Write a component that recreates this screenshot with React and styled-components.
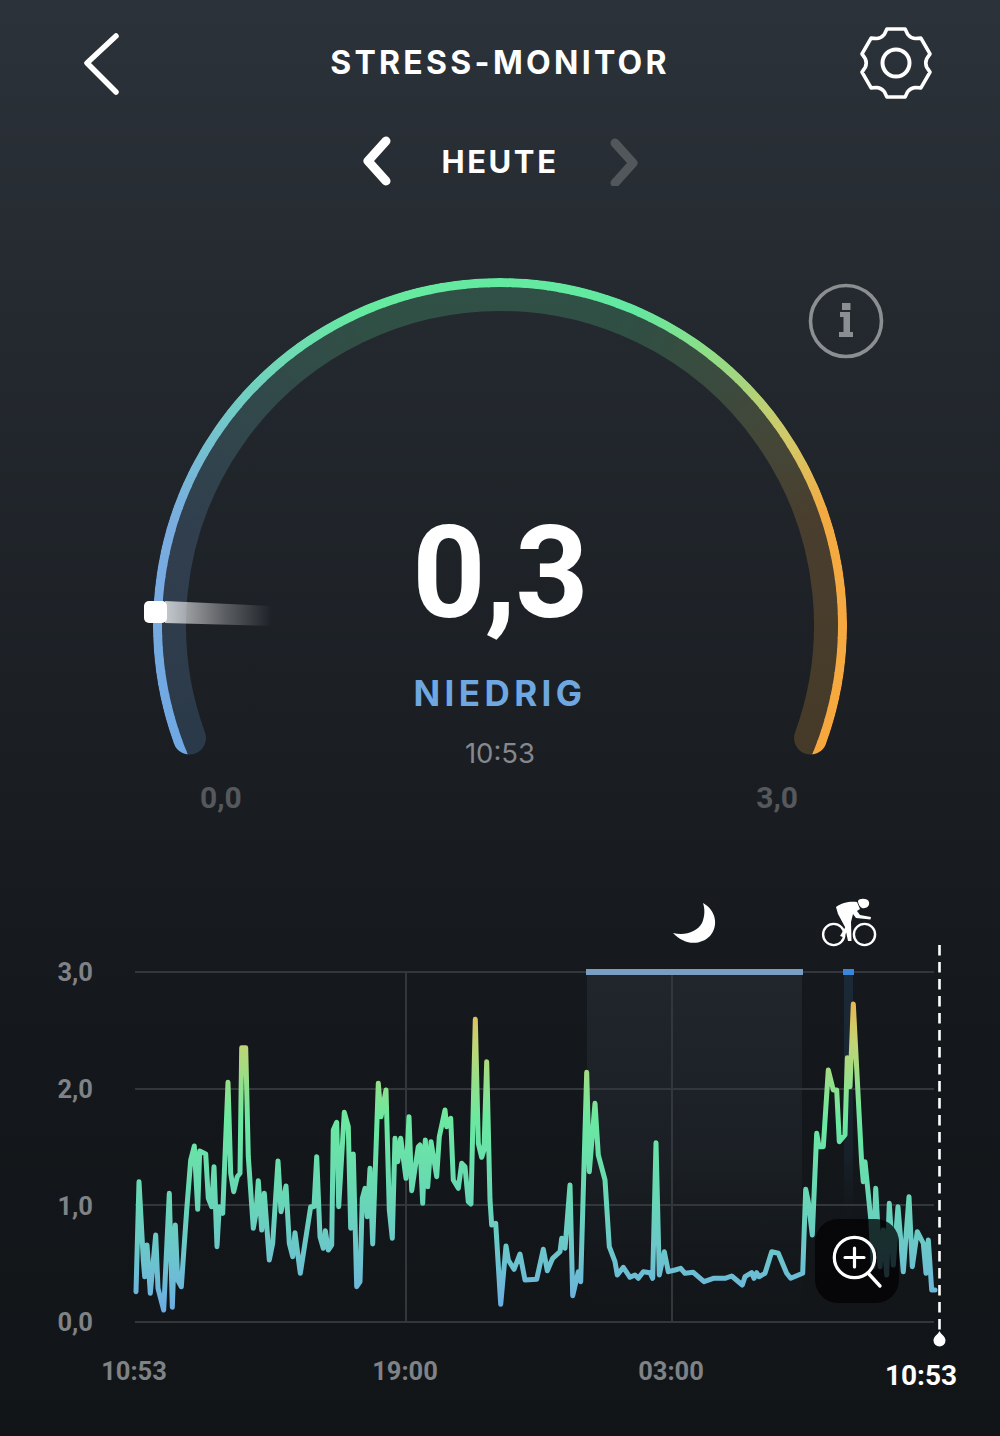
import React from "react";
import styled, { createGlobalStyle } from "styled-components";

const Global = createGlobalStyle`
  html, body { margin: 0; padding: 0; background: #12161a; }
  * { box-sizing: border-box; }
`;

const Page = styled.div`
  width: 1000px;
  height: 1436px;
  overflow: hidden;
  display: flex;
  flex-direction: column;
  background: linear-gradient(180deg, #2b3239 0%, #23282e 25%, #1b1f24 50%, #14181c 72%, #111518 100%);
  font-family: "Inter", "Liberation Sans", sans-serif;
  color: #fff;
`;

const Header = styled.header`
  height: 126px;
  padding: 0 67px;
  display: grid;
  grid-template-columns: 1fr auto 1fr;
  align-items: center;
`;

const BackIcon = styled.svg`
  justify-self: start;
  margin-left: 13px;
`;

const GearIcon = styled.svg`
  justify-self: end;
`;

const Title = styled.h1`
  margin: 0;
  font-size: 32px;
  font-weight: 700;
  letter-spacing: 3.3px;
  line-height: 1;
`;

const DayNav = styled.nav`
  height: 70px;
  display: flex;
  align-items: center;
  justify-content: center;
  gap: 46px;
`;

const DayLabel = styled.span`
  font-size: 31px;
  font-weight: 700;
  letter-spacing: 2.6px;
  line-height: 1;
`;

const GaugeSection = styled.section`
  position: relative;
  margin-top: 64px;
  width: 1000px;
`;

const GaugeSvg = styled.svg`
  display: block;
  width: 1000px;
  height: 520px;
`;

const Readout = styled.div`
  position: absolute;
  left: 0;
  right: 0;
  top: 248px;
  display: flex;
  flex-direction: column;
  align-items: center;
`;

const Value = styled.div`
  font-family: "Roboto", "Liberation Sans", sans-serif;
  font-weight: 700;
  font-size: 128px;
  line-height: 130px;
  letter-spacing: -1px;
`;

const Level = styled.div`
  margin-top: 35px;
  font-size: 35px;
  font-weight: 700;
  line-height: 40px;
  letter-spacing: 4.4px;
  color: #6fa7e0;
`;

const Time = styled.div`
  margin-top: 24px;
  font-size: 27.5px;
  line-height: 32px;
  color: #85888c;
`;

const InfoButton = styled.div`
  position: absolute;
  left: 808px;
  top: 23px;
  width: 76px;
  height: 76px;
`;

const Scale = styled.div`
  height: 34px;
  padding: 0 202px 0 200px;
  display: flex;
  align-items: center;
  justify-content: space-between;
  font-family: "Roboto", "Liberation Sans", sans-serif;
  font-weight: 700;
  font-size: 30px;
  color: #55585c;
`;

const ChartSection = styled.section`
  position: relative;
  margin-top: 76px;
  width: 1000px;
`;

const ChartSvg = styled.svg`
  display: block;
  width: 1000px;
  height: 530px;
`;

const Tick = styled.text`
  font-family: "Roboto", "Liberation Sans", sans-serif;
  font-weight: 700;
  font-size: ${(p) => (p.$now ? 28 : 25.5)}px;
  fill: ${(p) => (p.$now ? "#ffffff" : "#7f8286")};
`;

const ZoomButton = styled.button`
  position: absolute;
  left: 815px;
  top: 329px;
  width: 84px;
  height: 84px;
  padding: 0;
  border: 0;
  border-radius: 23px;
  background: rgba(2, 3, 4, 0.78);
  display: flex;
  align-items: center;
  justify-content: center;
`;

const scaleZ = (pts, ox, oy) => pts.map(([x, y]) => [x / 3 + ox, y / 3 + oy]);

const traceA = scaleZ(
  [[408,1025],[417,695],[430,930],[434,980],[441,885],[451,1030],[467,855],[474,1015],[491,1080],[508,730],[517,1072],[526,825],[533,990],[544,1010],[560,780],[572,630],[583,588],[593,778],[599,603],[617,612],[625,745],[635,770],[642,650],[651,890],[658,770],[668,790],[684,397],[692,670],[701,725],[712,680],[720,670],[725,293],[737,293],[745,620],[760,835],[768,790],[775,692],[785,840],[793,730],[808,930],[818,880],[834,633],[843,785],[858,708],[868,880],[878,920],[885,848],[901,970],[932,770],[942,770],[950,620],[960,860],[970,895],[976,842],[985,900],[995,885],[1000,540],[1010,517],[1016,770]],
  0, 950
);
const traceB = scaleZ(
  [[43,487],[55,530],[62,835],[70,612],[80,1010],[90,995],[97,745],[105,715],[112,800],[120,655],[128,882],[145,400],[153,500],[168,420],[178,780],[187,865],[195,565],[203,635],[212,565],[228,685],[237,500],[245,722],[265,590],[270,585],[278,760],[286,570],[293,710],[303,575],[320,680],[328,560],[345,480],[350,530],[362,505],[370,690],[385,715],[395,640],[405,650],[415,755],[423,762],[436,208],[445,580],[455,622],[462,600],[470,335],[480,750],[485,825],[497,820],[512,1063],[528,888],[535,930],[552,958],[570,912],[585,990],[620,988],[640,898],[652,962],[668,925],[690,905],[695,865],[705,895],[720,705],[728,1037],[745,965],[752,995],[770,367],[778,665],[795,460],[805,615],[825,690],[838,890],[855,935],[862,975],[880,952],[900,982],[915,975],[925,985],[940,965],[960,968],[968,985],[978,578],[988,975],[1003,905],[1015,965]],
  330, 950
);
const traceC = scaleZ(
  [[45,1140],[62,1135],[75,1150],[100,1147],[132,1175],[160,1165],[195,1165],[215,1158],[247,1185],[255,1160],[275,1148],[282,1165],[290,1148],[297,1160],[315,1150],[335,1085],[355,1090],[380,1150],[392,1165],[428,1150],[437,898],[445,935],[457,1035],[470,730],[477,770],[490,770],[505,540],[520,600],[530,600],[538,755],[555,735],[562,503],[570,590],[580,342],[605,820],[610,875],[615,815],[632,985],[640,1130],[647,895],[660,1130],[670,1020],[680,1155],[688,940],[700,1125],[714,950],[730,1145],[747,920],[757,1130],[772,1025],[790,1060],[798,1150],[805,1050],[815,1200],[825,1200]],
  660, 890
);
const tracePath =
  "M" + [...traceA, ...traceB, ...traceC].map(([x, y]) => `${x.toFixed(1)} ${y.toFixed(1)}`).join("L");

const CX = 500;
const CY = 625;
const START = 204;
const END = -24;
const stops = [
  [0, [111, 168, 227]],
  [0.18, [122, 172, 224]],
  [0.23, [116, 188, 212]],
  [0.28, [114, 203, 196]],
  [0.33, [110, 218, 180]],
  [0.4, [102, 234, 160]],
  [0.6, [98, 232, 160]],
  [0.65, [133, 224, 140]],
  [0.695, [165, 214, 126]],
  [0.73, [197, 205, 110]],
  [0.76, [215, 198, 100]],
  [0.81, [244, 170, 66]],
  [1, [246, 168, 62]],
];
const colorAt = (t) => {
  for (let i = 1; i < stops.length; i++) {
    if (t <= stops[i][0]) {
      const [t0, c0] = stops[i - 1];
      const [t1, c1] = stops[i];
      const k = (t - t0) / (t1 - t0);
      return `rgb(${c0.map((c, j) => Math.round(c + (c1[j] - c) * k)).join(",")})`;
    }
  }
  return "rgb(246,168,62)";
};
const polar = (r, a) => {
  const rad = (a * Math.PI) / 180;
  return [CX + r * Math.cos(rad), CY - r * Math.sin(rad)];
};
const arc = (r, a0, a1) => {
  const [x0, y0] = polar(r, a0);
  const [x1, y1] = polar(r, a1);
  const large = Math.abs(a0 - a1) > 180 ? 1 : 0;
  return `M${x0.toFixed(2)} ${y0.toFixed(2)}A${r} ${r} 0 ${large} 1 ${x1.toFixed(2)} ${y1.toFixed(2)}`;
};
const COUNT = 114;
const SEGMENTS = Array.from({ length: COUNT }, (_, i) => {
  const a0 = START + ((END - START) * i) / COUNT;
  const a1 = START + ((END - START) * (i + 1.15)) / COUNT;
  return { a0, a1: Math.max(a1, END), color: colorAt((i + 0.5) / COUNT) };
});

const gearPath = (() => {
  const c = 37;
  const pt = (r, a) => {
    const rad = (a * Math.PI) / 180;
    return `${(c + r * Math.cos(rad)).toFixed(2)} ${(c + r * Math.sin(rad)).toFixed(2)}`;
  };
  let d = "";
  for (let i = 0; i < 6; i++) {
    const a = -90 + i * 60;
    d += `${i === 0 ? "M" : "L"}${pt(31, a - 22)}L${pt(35.2, a - 15)}L${pt(35.2, a + 15)}L${pt(31, a + 22)}`;
    d += `A11 11 0 0 0 ${pt(31, a + 38)}`;
  }
  return d + "Z";
})();

function App() {
  return (
    <Page>
      <Global />
      <Header>
        <BackIcon width="44" height="66" viewBox="0 0 44 66" aria-label="Zurück">
          <path d="M36 4 L7 31 L36 60" transform="translate(0 2)" fill="none" stroke="#fff" strokeWidth="5.5" strokeLinecap="round" strokeLinejoin="round" />
        </BackIcon>
        <Title>STRESS-MONITOR</Title>
        <GearIcon width="74" height="74" viewBox="0 0 74 74" aria-label="Einstellungen">
          <path d={gearPath} fill="none" stroke="#fff" strokeWidth="3.6" strokeLinejoin="round" />
          <circle cx="37" cy="37" r="13.5" fill="none" stroke="#fff" strokeWidth="4" />
        </GearIcon>
      </Header>

      <DayNav>
        <svg width="34" height="50" viewBox="0 0 34 50">
          <path d="M25 5 L7 25 L25 45" fill="none" stroke="#fff" strokeWidth="9" strokeLinecap="round" strokeLinejoin="round" />
        </svg>
        <DayLabel>HEUTE</DayLabel>
        <svg width="34" height="50" viewBox="0 0 34 50">
          <path d="M10 7 L28 27 L10 47" fill="none" stroke="#52575c" strokeWidth="9" strokeLinecap="round" strokeLinejoin="round" />
        </svg>
      </DayNav>

      <GaugeSection>
        <GaugeSvg viewBox="0 260 1000 520">
          <defs>
            <linearGradient id="needle" gradientUnits="userSpaceOnUse" x1="165" y1="0" x2="272" y2="0">
              <stop offset="0" stopColor="#fff" stopOpacity="0.72" />
              <stop offset="0.55" stopColor="#fff" stopOpacity="0.28" />
              <stop offset="1" stopColor="#fff" stopOpacity="0" />
            </linearGradient>
            <mask id="band" maskUnits="userSpaceOnUse" x="0" y="260" width="1000" height="520">
              <path d={arc(330.5, 200, -20)} fill="none" stroke="#fff" strokeWidth="33" strokeLinecap="round" />
            </mask>
          </defs>
          <g mask="url(#band)">
            <g opacity="0.2">
              {SEGMENTS.map((s, i) => (
                <path key={i} d={arc(330, s.a0, s.a1)} fill="none" stroke={s.color} strokeWidth="36" />
              ))}
            </g>
            {SEGMENTS.map((s, i) => (
              <path key={i} d={arc(342.5, s.a0, s.a1)} fill="none" stroke={s.color} strokeWidth="9" />
            ))}
          </g>
          <polygon points="165,601 272,606 272,626 165,623" fill="url(#needle)" />
          <rect x="144" y="601" width="23" height="22" rx="5" fill="#fff" />
        </GaugeSvg>
        <Readout>
          <Value>0,3</Value>
          <Level>NIEDRIG</Level>
          <Time>10:53</Time>
        </Readout>
        <InfoButton>
          <svg width="76" height="76" viewBox="0 0 76 76" aria-label="Info">
            <circle cx="38" cy="38" r="35.5" fill="none" stroke="#8b8f92" strokeWidth="3.6" />
            <rect x="34" y="20" width="8.5" height="7" fill="#8b8f92" />
            <path d="M32 29 H42 V49 H45 V54 H31 V49 H35.5 V34 H32 Z" fill="#8b8f92" />
          </svg>
        </InfoButton>
      </GaugeSection>

      <Scale>
        <span>0,0</span>
        <span>3,0</span>
      </Scale>

      <ChartSection>
        <ChartSvg viewBox="0 890 1000 530">
          <defs>
            <linearGradient id="trace" gradientUnits="userSpaceOnUse" x1="0" y1="1000" x2="0" y2="1312">
              <stop offset="0" stopColor="#eab54f" />
              <stop offset="0.13" stopColor="#c4d473" />
              <stop offset="0.38" stopColor="#6be9a0" />
              <stop offset="0.62" stopColor="#68d8b4" />
              <stop offset="0.85" stopColor="#6cc2d0" />
              <stop offset="1" stopColor="#6cace4" />
            </linearGradient>
            <linearGradient id="sleep" x1="0" y1="0" x2="0" y2="1">
              <stop offset="0" stopColor="#21262d" />
              <stop offset="0.55" stopColor="#1c2127" stopOpacity="0.8" />
              <stop offset="1" stopColor="#14181c" stopOpacity="0" />
            </linearGradient>
            <linearGradient id="ride" x1="0" y1="0" x2="0" y2="1">
              <stop offset="0" stopColor="#1b2a38" />
              <stop offset="0.7" stopColor="#18212a" />
              <stop offset="1" stopColor="#14181c" stopOpacity="0" />
            </linearGradient>
          </defs>

          <rect x="587" y="972" width="215" height="350" fill="url(#sleep)" />
          <rect x="844" y="972" width="9" height="260" fill="url(#ride)" />

          {[972, 1089, 1205, 1322].map((y) => (
            <line key={y} x1="135" x2="934" y1={y} y2={y} stroke="#33373b" strokeWidth="2" />
          ))}
          {[406, 672].map((x) => (
            <line key={x} x1={x} x2={x} y1="972" y2="1322" stroke="#33373b" strokeWidth="2" />
          ))}

          <rect x="586" y="969" width="217" height="6" fill="#7a9dc2" />
          <rect x="843" y="969" width="11" height="6" fill="#3a86dc" />

          <path d={tracePath} fill="none" stroke="url(#trace)" strokeWidth="5" strokeLinejoin="round" strokeLinecap="round" />

          <line x1="939.5" x2="939.5" y1="945" y2="1332" stroke="#fff" strokeWidth="2.6" strokeDasharray="10.5 6.5" />
          <path d="M939.5 1331 C938 1335 933.5 1336 933.5 1340.5 A6 6 0 0 0 945.5 1340.5 C945.5 1336 941 1335 939.5 1331 Z" fill="#fff" />

          <path d="M703 903 C716 910 719 926 710 936 C700 946 684 945 673 933 C685 936 697 932 702 923 C705 916 705 909 703 903 Z" fill="#fff" />

          <g fill="none" stroke="#fff" strokeWidth="2.4">
            <circle cx="833.7" cy="934.5" r="10.6" />
            <circle cx="864.5" cy="934.5" r="10.6" />
          </g>
          <path d="M858 901 C859 898 868 898 869 902 C870 906 866 909 862 908 C860 907 858 904 858 901 Z" fill="#fff" />
          <path d="M836 907 C842 902 851 901 857 902 L860 909 L857 911 L860 915 L871 917 L870.5 919.5 L856 918 L853 914 L851 922 L851.5 941 L848 941 L845 927 L838 914 Z" fill="#fff" />
          <path d="M846 926 L840 936 L843 937 L850 928 Z" fill="#fff" />

          <Tick x="93" y="981" textAnchor="end">3,0</Tick>
          <Tick x="93" y="1098" textAnchor="end">2,0</Tick>
          <Tick x="93" y="1215" textAnchor="end">1,0</Tick>
          <Tick x="93" y="1331" textAnchor="end">0,0</Tick>
          <Tick x="134" y="1380" textAnchor="middle">10:53</Tick>
          <Tick x="405" y="1380" textAnchor="middle">19:00</Tick>
          <Tick x="671" y="1380" textAnchor="middle">03:00</Tick>
          <Tick $now x="921" y="1385" textAnchor="middle">10:53</Tick>
        </ChartSvg>
        <ZoomButton aria-label="Vergrößern">
          <svg width="84" height="84" viewBox="0 0 84 84">
            <circle cx="39.5" cy="38.5" r="20.2" fill="none" stroke="#fff" strokeWidth="3.2" />
            <path d="M30 38.5 H49 M39.5 29 V48" stroke="#fff" strokeWidth="3.2" strokeLinecap="round" />
            <path d="M53 54 L65 67" stroke="#fff" strokeWidth="3.4" strokeLinecap="round" />
          </svg>
        </ZoomButton>
      </ChartSection>
    </Page>
  );
}

export default App;
